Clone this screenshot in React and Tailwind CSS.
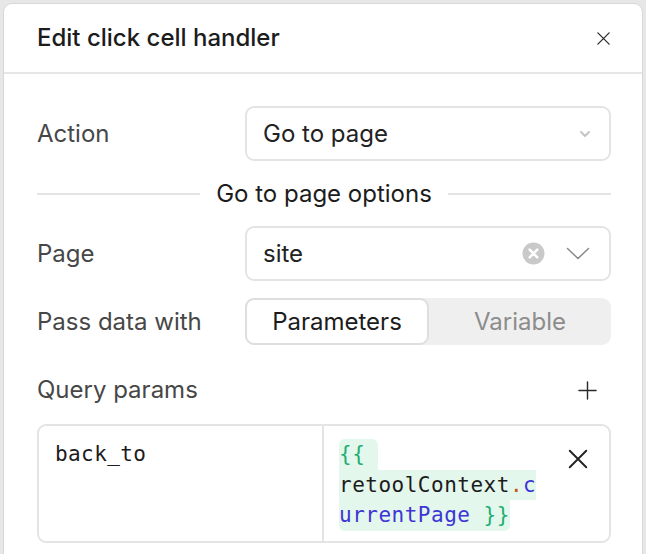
import React from "react";

const font = { fontFamily: "Inter, 'Noto Sans', sans-serif" };

function XIcon({ className }) {
  return (
    <svg className={className} viewBox="0 0 16 16" fill="none" stroke="currentColor" strokeWidth="1.4" strokeLinecap="round">
      <path d="M2 2 L14 14 M14 2 L2 14" />
    </svg>
  );
}

export default function App() {
  return (
    <div className="w-[646px] h-[554px] overflow-hidden bg-[#e7e7e7] pt-[3px] pl-[3px] pr-[3px]" style={font}>
      <div className="h-[600px] bg-white border border-[#d8d8d8] rounded-t-[9px]">
        {/* Header */}
        <div className="h-[70px] flex items-center justify-between pl-[33px] pr-[31px] border-b-2 border-[#e6e6e6]">
          <div className="text-[24px] leading-[30px] font-medium text-[#1c1c1c]">Edit click cell handler</div>
          <XIcon className="w-[15px] h-[15px] text-[#2a2a2a]" />
        </div>
        {/* Body */}
        <div className="pl-[33px] pr-[31px] pt-[32px] text-[24px] leading-[30px]">
          <div className="flex items-center">
            <div className="w-[208px] text-[#474747]">Action</div>
            <div className="flex-1 h-[55px] rounded-[9px] border-2 border-[#e4e4e4] flex items-center justify-between pl-[16px] pr-[18px]">
              <span className="text-[#222]">Go to page</span>
              <svg className="w-[12px] h-[8px] text-[#c4c4c4]" viewBox="0 0 12 8" fill="none" stroke="currentColor" strokeWidth="2" strokeLinecap="round" strokeLinejoin="round">
                <path d="M2 2 L6 6 L10 2" />
              </svg>
            </div>
          </div>

          <div className="h-[65px] flex items-center">
            <div className="flex-1 h-[2px] bg-[#e4e4e4]" />
            <div className="px-[16px] text-[#1c1c1c]">Go to page options</div>
            <div className="flex-1 h-[2px] bg-[#e4e4e4]" />
          </div>

          <div className="flex items-center">
            <div className="w-[208px] text-[#474747]">Page</div>
            <div className="flex-1 h-[55px] rounded-[9px] border-2 border-[#e4e4e4] flex items-center pl-[16px] pr-[19px]">
              <span className="flex-1 text-[#222]">site</span>
              <svg className="w-[23px] h-[23px]" viewBox="0 0 24 24">
                <circle cx="12" cy="12" r="11.5" fill="#c9c9c9" />
                <path d="M8 8 L16 16 M16 8 L8 16" stroke="white" strokeWidth="2.6" strokeLinecap="round" />
              </svg>
              <svg className="ml-[21px] w-[24px] h-[13px] text-[#8a8a8a]" viewBox="0 0 24 13" fill="none" stroke="currentColor" strokeWidth="1.5" strokeLinecap="round" strokeLinejoin="round">
                <path d="M1.5 1.5 L12 11.5 L22.5 1.5" />
              </svg>
            </div>
          </div>

          <div className="flex items-center mt-[17px]">
            <div className="w-[208px] text-[#474747]">Pass data with</div>
            <div className="flex-1 h-[47px] rounded-[9px] bg-[#efefef] flex">
              <div className="w-[184px] h-full rounded-[9px] bg-white border-2 border-[#dedede] flex items-center justify-center text-[#1c1c1c]">
                Parameters
              </div>
              <div className="flex-1 flex items-center justify-center text-[#8c8c8c]">Variable</div>
            </div>
          </div>

          <div className="flex items-center justify-between mt-[30px] h-[30px] pr-[14px]">
            <div className="text-[#474747]">Query params</div>
            <svg className="w-[19px] h-[19px] text-[#2a2a2a]" viewBox="0 0 20 20" fill="none" stroke="currentColor" strokeWidth="1.5" strokeLinecap="round">
              <path d="M10 1 V19 M1 10 H19" />
            </svg>
          </div>

          <div
            className="mt-[19px] h-[119px] rounded-[9px] border-2 border-[#e4e4e4] flex text-[21px] leading-[30.5px]"
            style={{ fontFamily: "'DejaVu Sans Mono', 'Liberation Mono', monospace" }}
          >
            <div className="w-[285px] border-r-2 border-[#e4e4e4] pl-[16px] pt-[13px] text-[#1c1c1c]" style={{ letterSpacing: "0.4px" }}>
              back_to
            </div>
            <div className="flex-1 flex pl-[15px] pt-[13px] pr-[20px]">
              <div className="flex-1 flex flex-col items-start" style={{ letterSpacing: "0.5px" }}>
                <span className="bg-[#e4f7ec] rounded-t-[6px] text-[#1fae72] whitespace-pre">{"{{ "}</span>
                <span className="bg-[#e4f7ec] text-[#1c1c1c] whitespace-pre">
                  retoolContext<span className="text-[#c2580a]">.</span><span className="text-[#3d35d6]">c</span>
                </span>
                <span className="bg-[#e4f7ec] rounded-b-[6px] whitespace-pre">
                  <span className="text-[#3d35d6]">urrentPage</span><span className="text-[#1fae72]">{" }}"}</span>
                </span>
              </div>
              <div className="pt-[9px]">
                <XIcon className="w-[22px] h-[22px] text-[#222]" />
              </div>
            </div>
          </div>
        </div>
      </div>
    </div>
  );
}
